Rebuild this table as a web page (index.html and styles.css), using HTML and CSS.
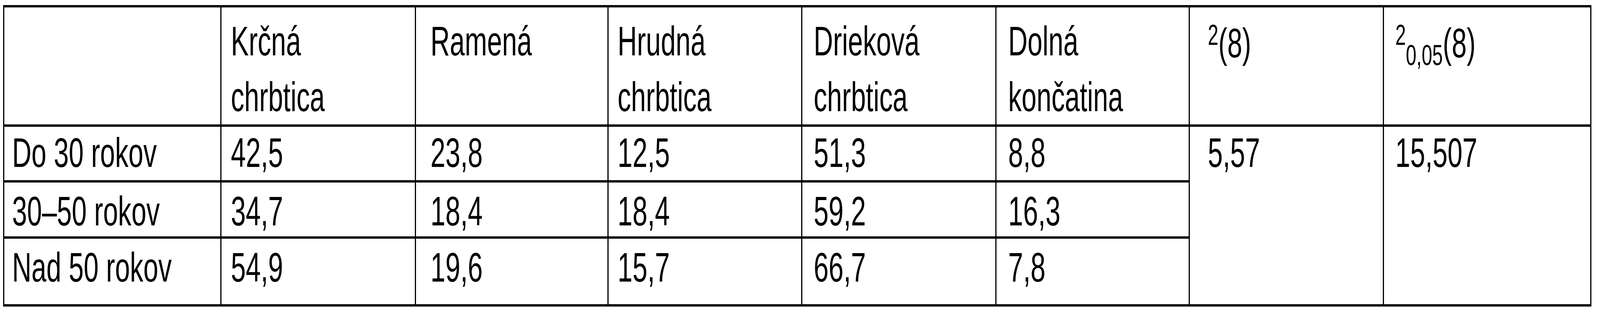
FILE: index.html
```html
<!DOCTYPE html>
<html lang="sk">
<head>
<meta charset="utf-8">
<title>Tabuľka</title>
<link rel="stylesheet" href="styles.css">
</head>
<body>
<div class="tbl" role="table">
  <div class="c hd k0" role="columnheader"></div>
  <div class="c hd k1" role="columnheader"><span class="t">Krčná<br>chrbtica</span></div>
  <div class="c hd k2" role="columnheader"><span class="t">Ramená</span></div>
  <div class="c hd k3" role="columnheader"><span class="t">Hrudná<br>chrbtica</span></div>
  <div class="c hd k4" role="columnheader"><span class="t">Drieková<br>chrbtica</span></div>
  <div class="c hd k5" role="columnheader"><span class="t">Dolná<br>končatina</span></div>
  <div class="c hd math k6" role="columnheader"><span class="t"><sup>2</sup>(8)</span></div>
  <div class="c hd math k7" role="columnheader"><span class="t"><sup>2</sup><sub>0,05</sub>(8)</span></div>

  <div class="c r1 k0" role="rowheader"><span class="t">Do 30 rokov</span></div>
  <div class="c r1 k1" role="cell"><span class="t">42,5</span></div>
  <div class="c r1 k2" role="cell"><span class="t">23,8</span></div>
  <div class="c r1 k3" role="cell"><span class="t">12,5</span></div>
  <div class="c r1 k4" role="cell"><span class="t">51,3</span></div>
  <div class="c r1 k5" role="cell"><span class="t">8,8</span></div>
  <div class="c r1 k6 span" role="cell"><span class="t">5,57</span></div>
  <div class="c r1 k7 span" role="cell"><span class="t">15,507</span></div>

  <div class="c r2 k0" role="rowheader"><span class="t">30–50 rokov</span></div>
  <div class="c r2 k1" role="cell"><span class="t">34,7</span></div>
  <div class="c r2 k2" role="cell"><span class="t">18,4</span></div>
  <div class="c r2 k3" role="cell"><span class="t">18,4</span></div>
  <div class="c r2 k4" role="cell"><span class="t">59,2</span></div>
  <div class="c r2 k5" role="cell"><span class="t">16,3</span></div>

  <div class="c r3 k0" role="rowheader"><span class="t">Nad 50 rokov</span></div>
  <div class="c r3 k1" role="cell"><span class="t">54,9</span></div>
  <div class="c r3 k2" role="cell"><span class="t">19,6</span></div>
  <div class="c r3 k3" role="cell"><span class="t">15,7</span></div>
  <div class="c r3 k4" role="cell"><span class="t">66,7</span></div>
  <div class="c r3 k5" role="cell"><span class="t">7,8</span></div>
</div>
<script src="app.js"></script>
</body>
</html>
```
FILE: styles.css
```css
:root {
  /* one pixel of the 6322x800 reference, mapped onto the actual viewport */
  --ux: calc(100vw / 6322);
  --uy: calc(100vh / 800);
  /* horizontal/vertical ratio of those units (set by app.js; 4096/6322 by default) */
  --sx: 0.6479;
}

html, body {
  margin: 0;
  background: #ffffff;
  overflow: hidden;
}

body {
  padding: calc(13 * var(--uy)) 0 0 calc(13 * var(--ux));
  font-family: "Liberation Sans", Arial, Helvetica, sans-serif;
  color: #000000;
}

.tbl {
  display: inline-grid;
  grid-template-columns:
    calc(858 * var(--ux)) calc(768 * var(--ux)) calc(761 * var(--ux)) calc(765 * var(--ux))
    calc(768 * var(--ux)) calc(763 * var(--ux)) calc(768 * var(--ux)) calc(819 * var(--ux));
  grid-template-rows: calc(306 * var(--uy)) calc(143 * var(--uy)) calc(144 * var(--uy)) calc(174 * var(--uy));
  border-left: calc(6 * var(--ux)) solid #000000;
  border-top: calc(6 * var(--uy)) solid #000000;
  font-size: calc(106 * var(--uy));
}

.c {
  box-sizing: border-box;
  border-right: calc(6 * var(--ux)) solid #000000;
  border-bottom: calc(6 * var(--uy)) solid #000000;
  white-space: nowrap;
  min-width: 0;
}

.t {
  display: inline-block;
  transform: scaleX(var(--sx));
  transform-origin: 0 0;
}

.hd {
  line-height: calc(143 * var(--uy));
  padding-top: calc(15 * var(--uy));
}

.hd.math {
  padding-top: calc(20 * var(--uy));
}

.r1 {
  line-height: calc(120 * var(--uy));
  padding-top: calc(6 * var(--uy));
}

.r2,
.r3 {
  line-height: calc(120 * var(--uy));
  padding-top: calc(13 * var(--uy));
}

.span {
  grid-row: span 3;
}

.k0 { padding-left: calc(30 * var(--ux)); }
.k1 { padding-left: calc(37 * var(--ux)); }
.k2 { padding-left: calc(57 * var(--ux)); }
.k3 { padding-left: calc(36 * var(--ux)); }
.k4 { padding-left: calc(46 * var(--ux)); }
.k5 { padding-left: calc(46 * var(--ux)); }
.k6 { padding-left: calc(72 * var(--ux)); }
.k7 { padding-left: calc(44 * var(--ux)); }

sup,
sub {
  font-size: calc(75 * var(--uy));
  line-height: 0;
}

sup {
  vertical-align: calc(32 * var(--uy));
}

sub {
  vertical-align: calc(-20 * var(--uy));
}
```
FILE: app.js
```js
(function () {
  var ratio = (window.innerWidth / 6322) / (window.innerHeight / 800);
  document.documentElement.style.setProperty('--sx', ratio.toFixed(4));
})();
```
